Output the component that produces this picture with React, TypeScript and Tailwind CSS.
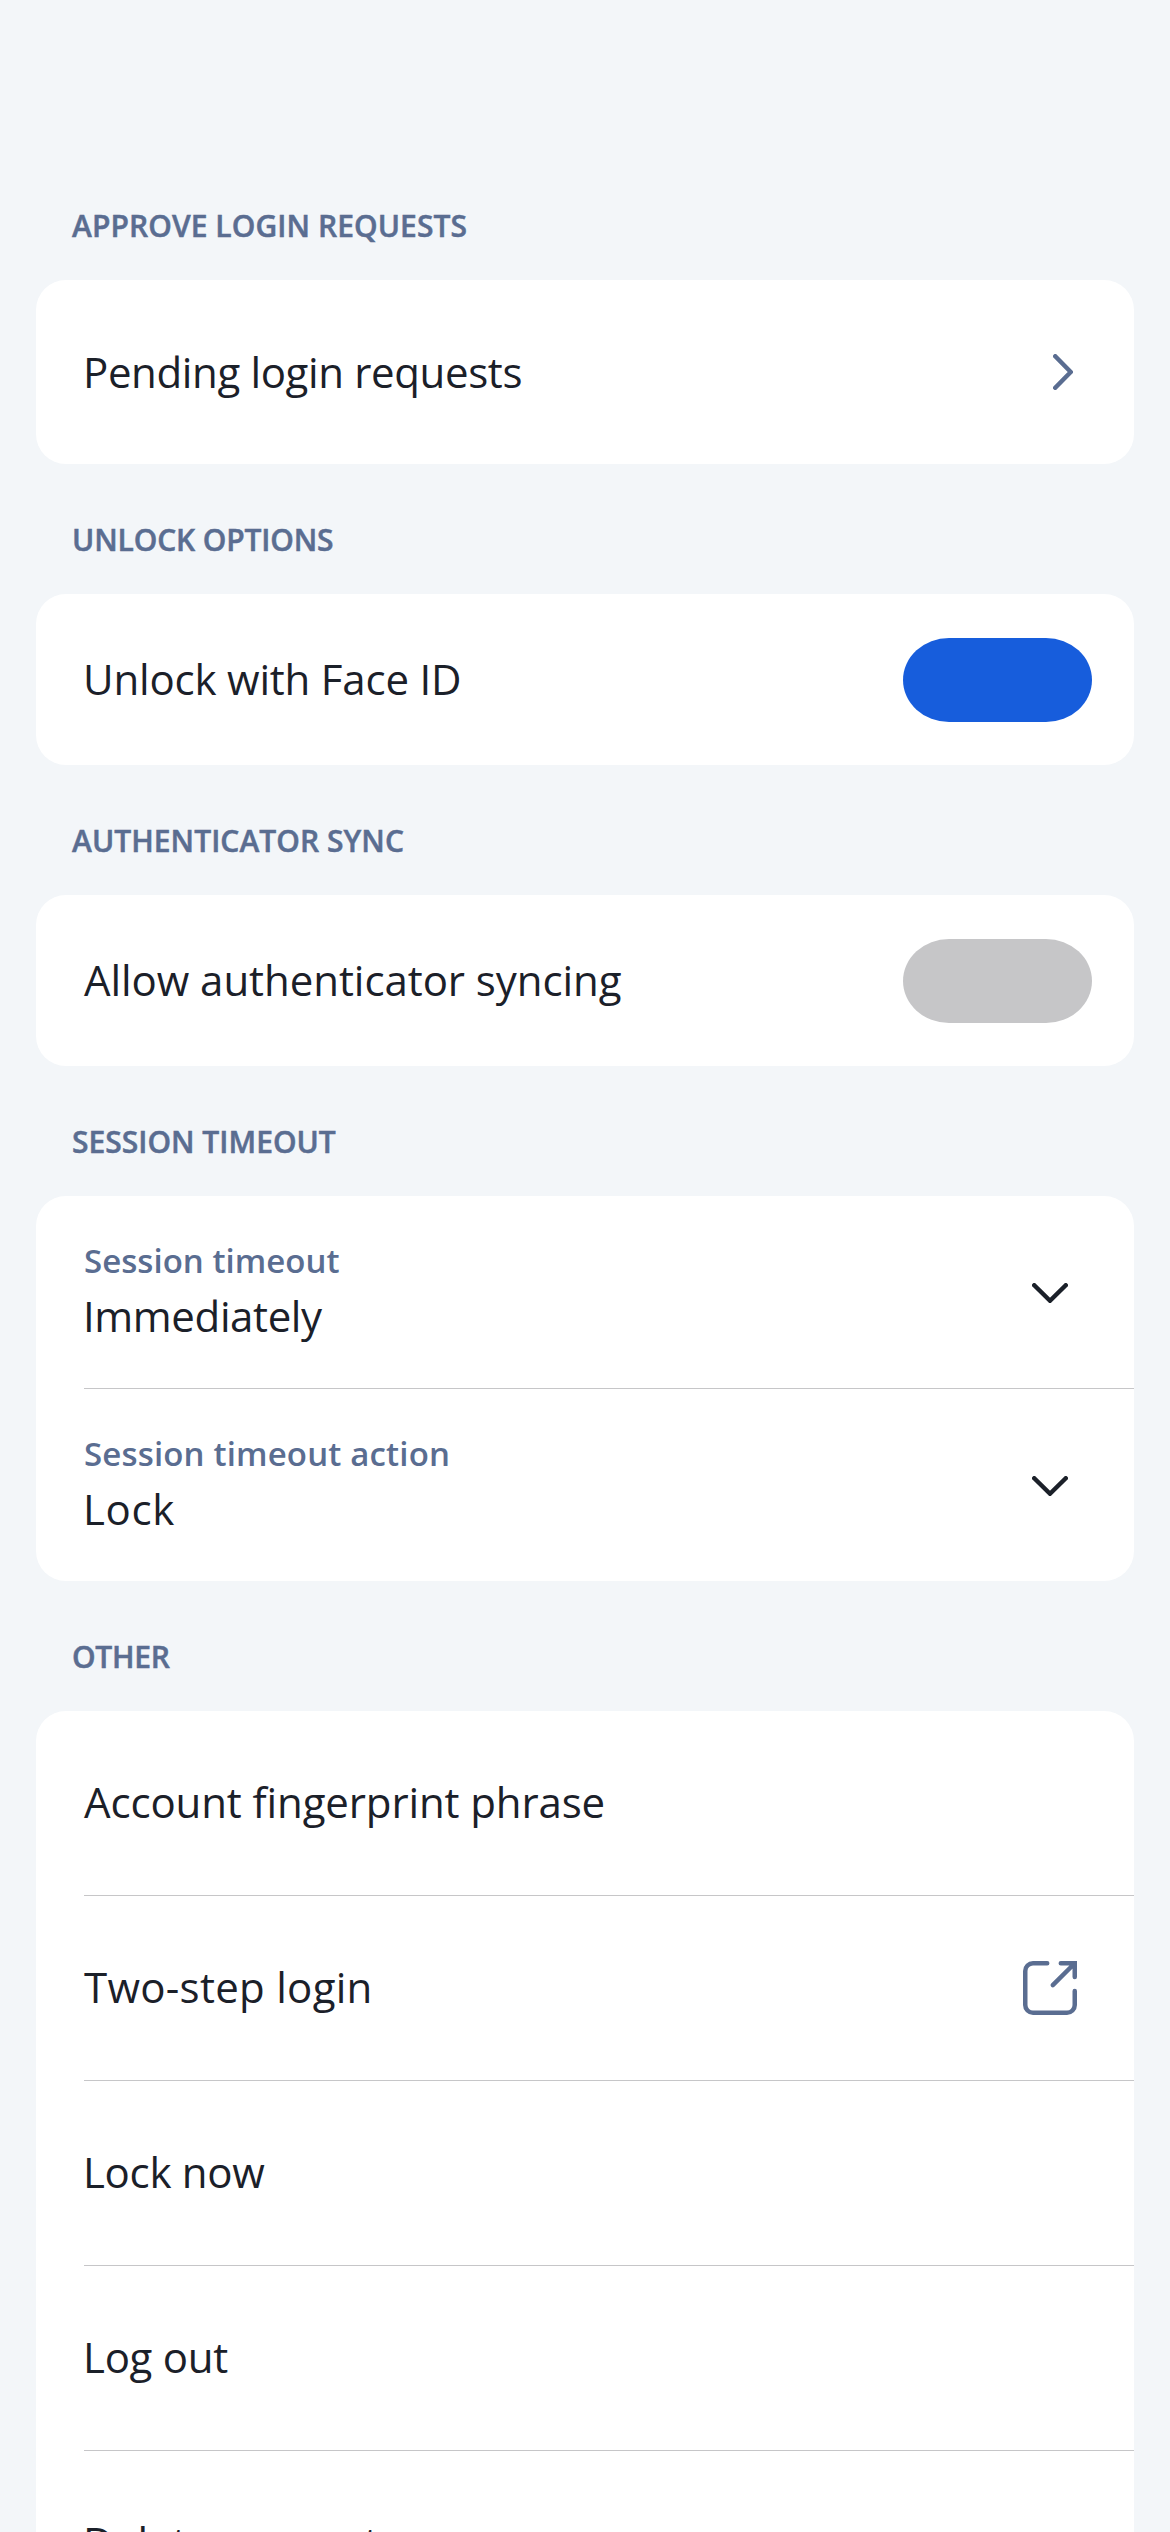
import type { ReactNode } from "react";

function Section({ title, spacing, children }: { title: string; spacing: string; children: ReactNode }) {
  return (
    <section>
      <h2 className={`h-[130px] pt-[56px] pl-9 text-[30px] leading-10 font-semibold text-[#5a6d91] [-webkit-text-stroke:0.5px_#5a6d91] ${spacing}`}>
        {title}
      </h2>
      <div className="overflow-hidden rounded-[30px] bg-white">{children}</div>
    </section>
  );
}

function Divider() {
  return <div className="ml-12 h-px bg-[#c6c6c8]" />;
}

function Row({ label, spacing, height = "h-[184px]", children }: { label: string; spacing: string; height?: string; children?: ReactNode }) {
  return (
    <div className={`flex items-center justify-between pl-12 ${height}`}>
      <span className={`text-[42px] whitespace-nowrap ${spacing}`}>{label}</span>
      {children}
    </div>
  );
}

function SelectRow({ label, value, labelSpacing, valueSpacing }: { label: string; value: string; labelSpacing: string; valueSpacing: string }) {
  return (
    <div className="flex h-48 items-center justify-between pr-[66px] pl-12">
      <div className="flex flex-col gap-[7px] self-start pt-[43px] whitespace-nowrap">
        <span className={`text-[33px] leading-[44px] font-semibold text-[#5a6d91] ${labelSpacing}`}>{label}</span>
        <span className={`-ml-px text-[42px] leading-[52px] ${valueSpacing}`}>{value}</span>
      </div>
      <svg className="mt-0.5 h-5 w-9" viewBox="0 0 36 20" fill="none" stroke="currentColor" strokeWidth="4.5" strokeLinecap="round" strokeLinejoin="round">
        <path d="M2.25 2.25 18 17.75 33.75 2.25" />
      </svg>
    </div>
  );
}

function Toggle({ on }: { on: boolean }) {
  return (
    <div
      role="switch"
      aria-checked={on}
      className={`mt-px mr-[42px] h-[84px] w-[189px] rounded-[46px_/_42px] ${on ? "bg-[#175ddc]" : "bg-[#c6c6c8]"}`}
    />
  );
}

export default function App() {
  return (
    <div className="h-[2532px] w-[1170px] overflow-hidden bg-[#f3f6f9] px-9 pt-[150px] font-['Open_Sans',sans-serif] text-[#1b2029]">
      <Section title="APPROVE LOGIN REQUESTS" spacing="tracking-[0.08px]">
        <Row label="Pending login requests" spacing="-ml-px pb-[2px] tracking-[-0.366px]">
          <svg className="mr-[61px] h-9 w-5 text-[#5a6d91]" viewBox="0 0 20 36" fill="none" stroke="currentColor" strokeWidth="4.5" strokeLinecap="round" strokeLinejoin="round">
            <path d="M2.25 2.25 17.75 18 2.25 33.75" />
          </svg>
        </Row>
      </Section>

      <Section title="UNLOCK OPTIONS" spacing="tracking-[-0.14px]">
        <Row label="Unlock with Face ID" spacing="-ml-px pb-[3px] tracking-[-0.188px]" height="h-[171px]">
          <Toggle on />
        </Row>
      </Section>

      <Section title="AUTHENTICATOR SYNC" spacing="tracking-[0.05px]">
        <Row label="Allow authenticator syncing" spacing="pb-[3px] tracking-[-0.06px]" height="h-[171px]">
          <Toggle on={false} />
        </Row>
      </Section>

      <Section title="SESSION TIMEOUT" spacing="tracking-[0.01px]">
        <SelectRow label="Session timeout" value="Immediately" labelSpacing="tracking-[0.03px]" valueSpacing="tracking-[-0.38px]" />
        <Divider />
        <SelectRow label="Session timeout action" value="Lock" labelSpacing="tracking-[0.163px]" valueSpacing="tracking-[0.664px]" />
      </Section>

      <Section title="OTHER" spacing="tracking-[-0.3px]">
        <Row label="Account fingerprint phrase" spacing="pb-1 tracking-[-0.12px]" />
        <Divider />
        <Row label="Two-step login" spacing="pb-1 tracking-[0.284px]">
          <svg className="mr-[57px] size-[54px] text-[#5a6d91]" viewBox="0 0 54 54" fill="none" stroke="currentColor" strokeWidth="4.5" strokeLinecap="round">
            <path d="M24.2 2.25H10A7.75 7.75 0 0 0 2.25 10V44A7.75 7.75 0 0 0 10 51.75H44A7.75 7.75 0 0 0 51.75 44V30" />
            <path strokeLinejoin="miter" d="M37.8 2.25H51.75V16M50.5 3.5 29.8 24.2" />
          </svg>
        </Row>
        <Divider />
        <Row label="Lock now" spacing="-ml-px pb-1 tracking-[-0.3px]" />
        <Divider />
        <Row label="Log out" spacing="-ml-px pb-1 tracking-[-0.288px]" />
        <Divider />
        <Row label="Delete account" spacing="-ml-px pb-1 tracking-[0.226px]" />
      </Section>
    </div>
  );
}
